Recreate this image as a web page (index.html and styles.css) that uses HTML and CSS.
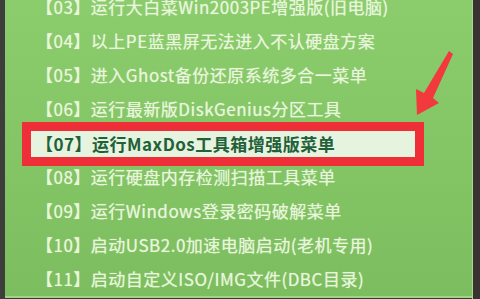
FILE: index.html
```html
<!DOCTYPE html>
<html lang="zh-CN">
<head>
<meta charset="utf-8">
<link rel="stylesheet" href="styles.css">
</head>
<body>
<div class="screen">
  <div class="edge edge-left"></div>
  <div class="panel">
    <ul class="menu">
      <li class="item">【03】运行大白菜Win2003PE增强版(旧电脑)</li>
      <li class="item">【04】以上PE蓝黑屏无法进入不认硬盘方案</li>
      <li class="item">【05】进入Ghost备份还原系统多合一菜单</li>
      <li class="item">【06】运行最新版DiskGenius分区工具</li>
      <li class="item sel">【07】运行MaxDos工具箱增强版菜单</li>
      <li class="item">【08】运行硬盘内存检测扫描工具菜单</li>
      <li class="item">【09】运行Windows登录密码破解菜单</li>
      <li class="item">【10】启动USB2.0加速电脑启动(老机专用)</li>
      <li class="item">【11】启动自定义ISO/IMG文件(DBC目录)</li>
    </ul>
    <svg class="arrow" width="50" height="70" viewBox="0 0 50 70">
      <polygon points="41,1 45,4 25,48 31,53 9,65 8,39 16,43" fill="#f23a3c"/>
    </svg>
  </div>
  <div class="edge edge-right"></div>
</div>
</body>
</html>
```
FILE: styles.css
```css
html, body {
  margin: 0;
  padding: 0;
  background: #383a38;
}
.screen {
  width: 480px;
  height: 299px;
  display: flex;
  overflow: hidden;
}
.edge-left {
  width: 5px;
  background: #3b3e3b;
}
.edge-right {
  width: 7px;
  background: #3a3133;
  border-left: 1px solid #a6d98c;
}
.panel {
  flex: 1;
  position: relative;
  background: linear-gradient(180deg, #8bcc6d 0%, #84c566 50%, #7cbd5f 100%);
  border-bottom: 2px solid #9fd487;
  height: 296px;
  overflow: hidden;
}
.menu {
  list-style: none;
  margin: -10px 0 0 0;
  padding: 0 0 0 26px;
  font-family: "Noto Sans CJK SC", "Noto Sans", sans-serif;
  font-size: 17px;
  letter-spacing: 0.5px;
  color: #e9f6dc;
}
.item {
  height: 34px;
  line-height: 34px;
  padding-left: 5px;
  white-space: nowrap;
  text-shadow: 0 0 1px rgba(240, 255, 230, 0.6);
}
.item.sel {
  width: 379px;
  height: 26px;
  line-height: 26px;
  margin: 5px 0 3px 0;
  background: #e6f3de;
  color: #22603a;
  font-weight: bold;
  text-shadow: none;
  outline: 9px solid #ef2f37;
}
.arrow {
  position: absolute;
  left: 403px;
  top: 50px;
}
```
